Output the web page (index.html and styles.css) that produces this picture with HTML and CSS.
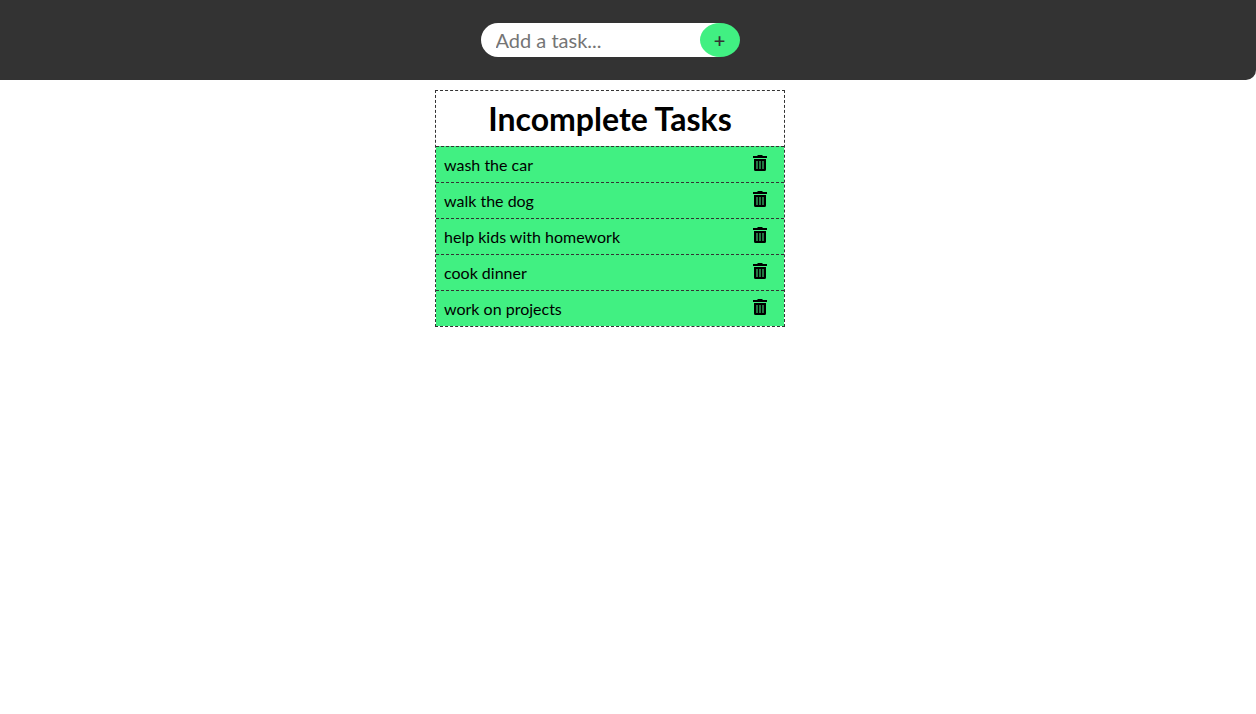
FILE: index.html
```html
<!DOCTYPE html>
<html lang="en">
<head>
<meta charset="utf-8">
<meta name="viewport" content="width=device-width, initial-scale=1">
<title>Tasks</title>
<link rel="stylesheet" href="styles.css">
</head>
<body>
<svg class="sprite" aria-hidden="true">
  <symbol id="trash" viewBox="0 0 14 16">
    <path d="M0 1h4l1-1h4l1 1h4v2H0z"/>
    <path fill-rule="evenodd" d="M1 4h12v10.500q0 1.500-1.500 1.500h-9Q1 16 1 14.500zM3 6v8h8V6z"/>
    <path fill-opacity=".5" d="M3 6h8v8H3z"/>
    <path d="M5 6h1v8H5zM8 6h1v8H8z"/>
  </symbol>
</svg>
<header class="header">
  <form class="task-form">
    <input class="task-input" type="text" placeholder="Add a task..." aria-label="Add a task">
    <button class="add-button" type="button" aria-label="Add">+</button>
  </form>
</header>
<main class="content">
  <section class="tasks">
    <h1 class="tasks-title">Incomplete Tasks</h1>
    <ul class="task-list">
      <li class="task"><span>wash the car</span><button class="delete" type="button" aria-label="Delete wash the car"><svg class="icon"><use href="#trash"/></svg></button></li>
      <li class="task"><span>walk the dog</span><button class="delete" type="button" aria-label="Delete walk the dog"><svg class="icon"><use href="#trash"/></svg></button></li>
      <li class="task"><span>help kids with homework</span><button class="delete" type="button" aria-label="Delete help kids with homework"><svg class="icon"><use href="#trash"/></svg></button></li>
      <li class="task"><span>cook dinner</span><button class="delete" type="button" aria-label="Delete cook dinner"><svg class="icon"><use href="#trash"/></svg></button></li>
      <li class="task"><span>work on projects</span><button class="delete" type="button" aria-label="Delete work on projects"><svg class="icon"><use href="#trash"/></svg></button></li>
    </ul>
  </section>
</main>
</body>
</html>
```
FILE: styles.css
```css
* {
  box-sizing: border-box;
}

body {
  margin: 0;
  background: #fff;
  color: #000;
  font: 16px/20px Lato, sans-serif;
}

.sprite {
  display: none;
}

.header,
.content {
  display: flex;
  justify-content: center;
  padding-right: 36px;
}

.header {
  padding-top: 23px;
  padding-bottom: 23px;
  background: #333;
  border-bottom-right-radius: 10px;
}

.task-form {
  display: flex;
  width: 259px;
}

.task-input {
  flex: 1;
  min-width: 0;
  height: 34px;
  padding: 0 24px 0 15px;
  border: 0;
  border-radius: 17px 0 0 17px;
  background: #fff;
  font: 20px Lato, sans-serif;
}

.task-input::placeholder {
  color: #757575;
}

.add-button {
  width: 40px;
  height: 34px;
  margin-left: -20px;
  padding: 0;
  border: 0;
  border-radius: 50%;
  background: #41f082;
  color: #333;
  font: 600 20px Lato, sans-serif;
}

.content {
  padding-top: 10px;
}

.tasks {
  width: 350px;
  border: 1px dashed #333;
}

.tasks-title {
  margin: 0;
  padding: 8px 0 7px;
  font-size: 32px;
  font-weight: 700;
  line-height: 40px;
  text-align: center;
}

.task-list {
  margin: 0;
  padding: 0;
  list-style: none;
}

.task {
  display: flex;
  align-items: flex-start;
  justify-content: space-between;
  padding: 8px 17px 7px 8px;
  border-top: 1px dashed #333;
  background: #41f082;
}

.delete {
  display: flex;
  padding: 0;
  border: 0;
  background: none;
}

.icon {
  width: 14px;
  height: 16px;
}
```
